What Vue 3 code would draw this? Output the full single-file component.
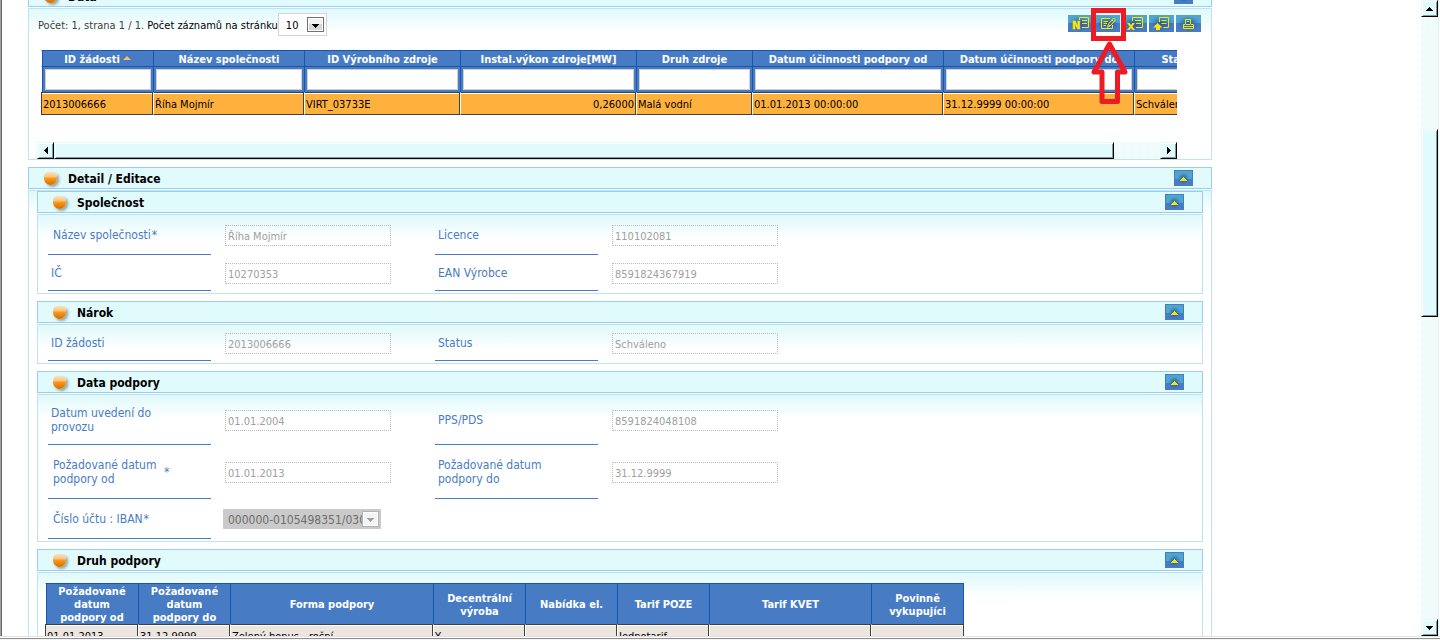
<script setup>
import { ref } from 'vue'

const columns = [
  { title: 'ID žádosti', width: 112, value: '2013006666', sorted: true },
  { title: 'Název společnosti', width: 151, value: 'Říha Mojmír' },
  { title: 'ID Výrobního zdroje', width: 156, value: 'VIRT_03733E' },
  { title: 'Instal.výkon zdroje[MW]', width: 176, value: '0,26000', numeric: true },
  { title: 'Druh zdroje', width: 116, value: 'Malá vodní' },
  { title: 'Datum účinnosti podpory od', width: 191, value: '01.01.2013 00:00:00' },
  { title: 'Datum účinnosti podpory do', width: 191, value: '31.12.9999 00:00:00' },
  { title: 'Status', width: 90, value: 'Schváleno' }
]

const tools = [
  { id: 'new', label: 'Nový záznam' },
  { id: 'edit', label: 'Upravit záznam' },
  { id: 'remove', label: 'Smazat záznam' },
  { id: 'export', label: 'Export' },
  { id: 'print', label: 'Tisk' }
]

const sections = [
  {
    title: 'Společnost',
    rows: [
      { size: 'medium', fields: [
        { id: 'nazev', label: 'Název společnosti', required: true, value: 'Říha Mojmír' },
        { id: 'licence', label: 'Licence', value: '110102081' }
      ] },
      { size: 'short', fields: [
        { id: 'ic', label: 'IČ', value: '10270353' },
        { id: 'ean', label: 'EAN Výrobce', value: '8591824367919' }
      ] }
    ]
  },
  {
    title: 'Nárok',
    rows: [
      { size: 'short', fields: [
        { id: 'zadost', label: 'ID žádosti', value: '2013006666' },
        { id: 'status', label: 'Status', value: 'Schváleno' }
      ] }
    ]
  },
  {
    title: 'Data podpory',
    rows: [
      { size: 'tall', fields: [
        { id: 'uvedeni', label: 'Datum uvedení do provozu', value: '01.01.2004' },
        { id: 'pps', label: 'PPS/PDS', value: '8591824048108' }
      ] },
      { size: 'taller', fields: [
        { id: 'od', label: 'Požadované datum podpory od', required: true, value: '01.01.2013' },
        { id: 'do', label: 'Požadované datum podpory do', value: '31.12.9999' }
      ] },
      { size: 'medium', fields: [
        { id: 'iban', label: 'Číslo účtu : IBAN', required: true, select: true, value: '000000-0105498351/0300' }
      ] }
    ]
  }
]

const supportColumns = [
  { title: 'Požadované datum podpory od', width: 93, value: '01.01.2013' },
  { title: 'Požadované datum podpory do', width: 92, value: '31.12.9999' },
  { title: 'Forma podpory', width: 203, value: 'Zelený bonus - roční' },
  { title: 'Decentrální výroba', width: 92, value: 'Y' },
  { title: 'Nabídka el.', width: 92, value: '' },
  { title: 'Tarif POZE', width: 92, value: 'Jednotarif' },
  { title: 'Tarif KVET', width: 162, value: '' },
  { title: 'Povinně vykupujíci', width: 93, value: '' }
]

const filters = ref(columns.map(() => ''))
</script>

<template>
  <div class="window">
    <div class="viewport">
      <main class="content">
        <header class="bar">
          <span class="ball"></span>
          <h2>Data</h2>
          <button class="toggle" type="button" aria-label="Sbalit Data"><svg width="7" height="4"><path d="M3 0h1v1h1v1h1v1h1v1H0V3h1V2h1V1h1z" fill="#ffe100" /></svg></button>
        </header>
        <section class="panel data">
          <div class="top">
            <p class="count">Počet: 1, strana 1 / 1. <label for="pagesize">Počet záznamů na stránku</label></p>
            <span class="pager">
              <select id="pagesize"><option>10</option></select>
              <span class="arrow"><svg width="7" height="4"><path d="M0 0h7v1H6v1H5v1H4v1H3V3H2V2H1V1H0z" /></svg></span>
            </span>
            <div class="tools">
              <div v-for="tool in tools" :key="tool.id" class="tool">
                <button type="button" :aria-label="tool.label">
                  <svg width="25" height="17" viewBox="0 0 25 17" fill="none" stroke="#ffe600">
                    <template v-if="tool.id === 'new'">
                      <text x="4" y="14" class="glyph">N</text>
                      <path d="M11.500 5V2.500H20.500V12.500H14M14 5.500H19M14 8.500H19" />
                    </template>
                    <template v-else-if="tool.id === 'edit'">
                      <path d="M15 3.500H6.500V13.500H17.500V10M8.500 6.500H13M8.500 8.500H12M8.500 10.500H11" />
                      <path d="M12.500 12.500l1-3.500L18.500 3l2 2-5.500 6zM13.500 9.500l1.500 1.500M17 5l1.500 1.500" />
                    </template>
                    <template v-else-if="tool.id === 'remove'">
                      <path d="M5 8h2.500l1.500 2 1.500-2H13L10.300 11.500 13 15H10.500L9 13 7.500 15H5L7.700 11.500z" fill="#ffe600" stroke="none" />
                      <path d="M10.500 6V2.500H20.500V12.500H14M13 5.500H19M14 8.500H19" />
                    </template>
                    <template v-else-if="tool.id === 'export'">
                      <path d="M8.500 8L4 12.500H7V15H11V12.500H13.500z" fill="#ffe600" stroke="none" />
                      <path d="M10.500 7V2.500H19.500V12.500H14.500M12.500 5.500H17.500M12.500 8.500H17.500" />
                    </template>
                    <template v-else>
                      <path d="M9.500 9V4.500H14.500V9M11 6.500H13M9.500 9.500H7.500V13.500H17.500V9.500H14.500M7.500 11.500H17.500M10 9.500H14" />
                    </template>
                  </svg>
                </button>
                <svg v-if="tool.id === 'edit'" class="marker" width="40" height="97" viewBox="0 0 40 97" fill="none" stroke="#ed1c24" aria-hidden="true">
                  <rect x="4.500" y="2.500" width="30" height="28" stroke-width="5" />
                  <path d="M20.500 36L5 64H13V93.500H28.500V64H36z" stroke-width="5" stroke-linejoin="round" />
                </svg>
              </div>
            </div>
          </div>
          <div class="scroller">
            <div class="clip">
              <table class="grid main-grid">
                <colgroup><col v-for="c in columns" :key="c.title" :style="{ width: c.width + 'px' }" /></colgroup>
                <thead>
                  <tr>
                    <th v-for="c in columns" :key="c.title" scope="col">{{ c.title }}<svg v-if="c.sorted" class="sort" width="8" height="4"><path d="M4 0L8 4H0z" fill="#ffb96a" /></svg></th>
                  </tr>
                  <tr class="filter">
                    <td v-for="(c, i) in columns" :key="c.title"><input v-model="filters[i]" type="text" :aria-label="c.title" /></td>
                  </tr>
                </thead>
                <tbody>
                  <tr><td v-for="c in columns" :key="c.title" :class="{ numeric: c.numeric }">{{ c.value }}</td></tr>
                </tbody>
              </table>
            </div>
            <div class="hbar" aria-hidden="true">
              <span class="key"><svg width="4" height="7"><path d="M3 0h1v7H3V6H2V5H1V4H0V3h1V2h1V1h1z" /></svg></span>
              <span class="hthumb"></span>
              <span class="htrack"></span>
              <span class="key"><svg width="4" height="7"><path d="M0 0h1v1h1v1h1v1h1v1H3v1H2v1H1v1H0z" /></svg></span>
            </div>
          </div>
        </section>

        <header class="bar">
          <span class="ball"></span>
          <h2>Detail / Editace</h2>
          <button class="toggle" type="button" aria-label="Sbalit Detail"><svg width="7" height="4"><path d="M3 0h1v1h1v1h1v1h1v1H0V3h1V2h1V1h1z" fill="#ffe100" /></svg></button>
        </header>
        <div class="panel detail">
          <template v-for="s in sections" :key="s.title">
            <header class="bar">
              <span class="ball"></span>
              <h3>{{ s.title }}</h3>
              <button class="toggle" type="button" :aria-label="'Sbalit ' + s.title"><svg width="7" height="4"><path d="M3 0h1v1h1v1h1v1h1v1H0V3h1V2h1V1h1z" fill="#ffe100" /></svg></button>
            </header>
            <section class="panel form">
              <div v-for="(row, r) in s.rows" :key="r" class="row" :class="row.size">
                <div v-for="f in row.fields" :key="f.id" class="field">
                  <label :for="f.id" :class="{ required: f.required }"><span class="name">{{ f.label }}</span><span v-if="f.required">*</span></label>
                  <span v-if="f.select" class="account">
                    <select :id="f.id" disabled><option>{{ f.value }}</option></select>
                    <span class="arrow"><svg width="7" height="4"><path d="M0 0h7v1H6v1H5v1H4v1H3V3H2V2H1V1H0z" fill="#a0a0a0" /></svg></span>
                  </span>
                  <input v-else :id="f.id" type="text" :value="f.value" disabled />
                </div>
              </div>
            </section>
          </template>
          <header class="bar">
            <span class="ball"></span>
            <h3>Druh podpory</h3>
            <button class="toggle" type="button" aria-label="Sbalit Druh podpory"><svg width="7" height="4"><path d="M3 0h1v1h1v1h1v1h1v1H0V3h1V2h1V1h1z" fill="#ffe100" /></svg></button>
          </header>
          <section class="panel support">
            <table class="grid support-grid">
              <colgroup><col v-for="c in supportColumns" :key="c.title" :style="{ width: c.width + 'px' }" /></colgroup>
              <thead><tr><th v-for="c in supportColumns" :key="c.title" scope="col">{{ c.title }}</th></tr></thead>
              <tbody><tr><td v-for="c in supportColumns" :key="c.title">{{ c.value }}</td></tr></tbody>
            </table>
          </section>
        </div>
      </main>
      <div class="vbar" aria-hidden="true">
        <span class="key"><svg width="7" height="4"><path d="M3 0h1v1h1v1h1v1h1v1H0V3h1V2h1V1h1z" /></svg></span>
        <span class="vtrack before"></span>
        <span class="vthumb"></span>
        <span class="vtrack after"></span>
        <span class="key"><svg width="7" height="4"><path d="M0 0h7v1H6v1H5v1H4v1H3V3H2V2H1V1H0z" /></svg></span>
      </div>
    </div>
    <div class="edge"></div>
  </div>
</template>

<style>
body {
  background: #fff;
}
</style>

<style scoped>
* {
  box-sizing: border-box;
}
.window {
  height: 100vh;
  display: flex;
  flex-direction: column;
  overflow: hidden;
  font-family: Tahoma, "DejaVu Sans Condensed", "DejaVu Sans", sans-serif;
  font-size: 11px;
  color: #000;
}
input, select, button {
  font-family: inherit;
  font-size: 11px;
  margin: 0;
  border-radius: 0;
}
.viewport {
  flex: 1;
  min-height: 0;
  display: flex;
  padding-right: 1px;
  border-left: 1px solid #a0a0a0;
  box-shadow: inset 1px 0 #696969;
}
.content {
  flex: 1;
  min-width: 0;
  overflow: hidden;
  padding: 0 209px 0 27px;
}
.content > .bar:first-child {
  margin-top: -15px;
}
.edge {
  height: 4px;
  flex: none;
  border-top: 1px solid #e3e3e3;
  border-bottom: 1px solid #f4f4f4;
  box-shadow: inset 0 -1px #909090;
}
.bar {
  height: 22px;
  margin-bottom: 1px;
  padding: 0 18px 0 15px;
  display: flex;
  align-items: center;
  background: #e1fafc;
  border: 1px solid #98cfec;
}
.bar h2, .bar h3 {
  flex: 1;
  margin: 0 0 0 11px;
  padding-top: 2px;
  font-size: 12px;
  line-height: 16px;
}
.ball {
  width: 13px;
  height: 13px;
  margin-top: 1px;
  border-radius: 5px 5px 7px 7px;
  background: linear-gradient(#fbe0bd 0, #fcc27a 5px, #ff9a12 6px, #d26c00 100%);
  box-shadow: 2px 2px 3px #93a3a5;
}
.toggle {
  width: 19px;
  height: 16px;
  padding: 1px 0 0;
  display: flex;
  align-items: center;
  justify-content: center;
  border: 1px solid #477cc4;
  background: radial-gradient(circle at 50% 55%, #215e9c 0, transparent 6px), linear-gradient(#50a5cc 55%, #477cc4 55%);
}
.panel {
  margin-bottom: 7px;
  border: 1px solid #bfe4f0;
  background: linear-gradient(#dff9fb 0, #fff 24px);
}
.top {
  height: 41px;
  padding: 4px 10px 0 9px;
  display: flex;
  align-items: flex-start;
}
.count {
  margin: 0;
  line-height: 26px;
  color: #404040;
}
.count label {
  color: #000;
}
.pager {
  display: flex;
  position: relative;
}
.pager select {
  appearance: none;
  width: 49px;
  height: 23px;
  padding: 1px 20px 0 7px;
  border: 1px solid #d5d5d5;
  background: #fff;
  color: #000;
}
.arrow {
  position: absolute;
  right: 3px;
  top: 4px;
  width: 17px;
  height: 15px;
  padding-top: 2px;
  display: flex;
  align-items: center;
  justify-content: center;
  border: 1px solid #707070;
  box-shadow: inset 0 0 0 1px #fff;
  background: linear-gradient(#f2f2f2 50%, #d8d8d8 50%);
  pointer-events: none;
}
.tools {
  margin: 2px 0 0 auto;
  display: flex;
  gap: 2px;
}
.tool {
  position: relative;
}
.tool button {
  display: block;
  width: 25px;
  height: 17px;
  padding: 0;
  border: 0;
  background: radial-gradient(ellipse at 50% 50%, #23599f 0, transparent 11px), linear-gradient(#50a5cc 50%, #477cc4 50%);
}
.tool button svg {
  display: block;
}
.glyph {
  font: bold 10px "DejaVu Sans", sans-serif;
  fill: #ffe600;
  stroke: #ffe600;
  stroke-width: 0.5px;
}
.marker {
  position: absolute;
  left: -6px;
  top: -7px;
  z-index: 2;
  pointer-events: none;
}
.scroller {
  margin: 0 34px 0 8px;
}
.clip {
  height: 92px;
  padding-left: 4px;
  overflow: hidden;
}
.grid {
  table-layout: fixed;
  border-collapse: separate;
  border-spacing: 0;
}
.main-grid {
  width: 1183px;
}
.grid th {
  padding: 0 4px;
  border-top: 1px solid #1656ad;
  border-left: 1px solid #1656ad;
  background: #477cc4;
  color: #fff;
  font-size: 11px;
  line-height: 13px;
  text-align: center;
  white-space: nowrap;
}
.main-grid th {
  height: 16px;
  padding-top: 2px;
}
.grid th:first-child, .filter td:first-child {
  border-left-color: #fff;
  box-shadow: inset 1px 0 #1656ad;
}
.filter td {
  height: 26px;
  padding: 2px;
  border-top: 1px solid #1656ad;
  border-left: 1px solid #1656ad;
  background: #477cc4;
}
.filter td:first-child {
  padding-left: 3px;
}
.filter input {
  display: block;
  width: 100%;
  height: 21px;
  border: 1px solid #d0d0d0;
  background: #fff;
}
.sort {
  margin: 0 0 3px 3px;
  vertical-align: baseline;
}
.grid tbody td {
  height: 23px;
  padding: 2px 1px 0;
  border: 1px solid #404040;
  border-left-color: #fff;
  box-shadow: inset 0 1px #fff;
  background: #ffb13d;
  line-height: 14px;
  white-space: nowrap;
}
.grid tbody td:first-child {
  border-left-color: #404040;
}
.grid td.numeric {
  text-align: right;
}
.hbar {
  display: flex;
  height: 17px;
}
.key, .hthumb, .vthumb {
  background: #e1fafc;
  border: 1px solid;
  border-color: #e1fafc #000 #000 #e1fafc;
  box-shadow: inset 1px 1px #fff, inset -1px -1px #7f9d9e;
}
.key {
  width: 17px;
  height: 17px;
  flex: none;
  display: flex;
  align-items: center;
  justify-content: center;
}
.hthumb {
  flex: 1060;
}
.htrack {
  flex: 46;
}
.htrack, .vtrack {
  background: repeating-conic-gradient(#e1fafc 0 25%, #fff 0 50%) 0 0 / 2px 2px;
}
.detail {
  padding: 0 8px;
}
.form {
  padding: 0 0 2px 10px;
}
.row {
  display: flex;
  gap: 44px;
}
.short {
  height: 36px;
}
.medium {
  height: 40px;
}
.tall {
  height: 50px;
}
.taller {
  height: 54px;
}
.field {
  display: grid;
  grid-template-columns: 163px 168px;
  gap: 12px;
  align-items: center;
}
.field label {
  height: 100%;
  padding-left: 3px;
  display: flex;
  align-items: center;
  gap: 1px;
  border-bottom: 1px solid #477cc4;
  color: #477cc4;
  font-size: 12px;
  line-height: 14px;
}
.field label.required {
  padding-left: 5px;
}
.name {
  max-width: 110px;
}
.field input {
  width: 166px;
  height: 21px;
  margin-left: 2px;
  padding: 2px 2px 0;
  border: 1px dotted #bbb;
  background: transparent;
  color: #a0a0a0;
}
.account {
  position: relative;
  display: flex;
  width: 158px;
}
.account select {
  appearance: none;
  width: 100%;
  height: 20px;
  padding: 2px 19px 0 5px;
  border: 0;
  background: #cacaca;
  color: #6d6d6d;
  font-size: 12px;
  opacity: 1;
}
.account .arrow {
  right: 2px;
  top: 2px;
  height: 16px;
  border-color: #adb2b5;
  background: #f4f4f4;
}
.support {
  padding: 10px 0 8px 7px;
}
.support-grid {
  width: 919px;
}
.support-grid th {
  height: 40px;
  padding-top: 1px;
  white-space: normal;
}
.support-grid th:last-child {
  border-right: 1px solid #1656ad;
}
.support-grid tbody td {
  background: #ede5e0;
}
.vbar {
  width: 18px;
  flex: none;
  display: flex;
  flex-direction: column;
  border-right: 1px solid #eee;
}
.vthumb {
  flex: 187;
}
.before {
  flex: 112;
}
.after {
  flex: 303;
}
</style>
